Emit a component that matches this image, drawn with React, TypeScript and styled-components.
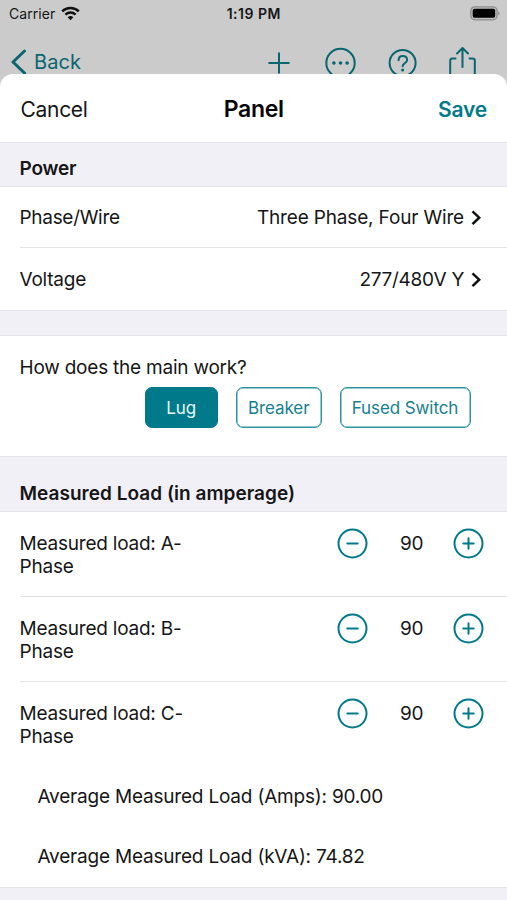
import React, { useState } from "react";
import styled, { createGlobalStyle, css } from "styled-components";

const TEAL = "#007a8a";
const DIM_TEAL = "#096570";
const LINE = "#e4e4e8";
const GROUP = "#f0f0f6";

const GlobalStyle = createGlobalStyle`
  * { box-sizing: border-box; }
  body {
    margin: 0;
    background: #cbcbcb;
    color: #161618;
    font-family: Inter, "Liberation Sans", sans-serif;
    font-size: 19px;
    line-height: 23px;
  }
  button { font: inherit; color: inherit; background: none; border: 0; padding: 0; margin: 0; }
  svg { display: block; flex: none; }
`;

const Screen = styled.div`
  width: 507px;
  height: 900px;
  overflow: hidden;
  display: flex;
  flex-direction: column;
  background: #cbcbcb;
`;

const StatusBar = styled.div`
  height: 28px;
  flex: none;
  display: grid;
  grid-template-columns: 1fr auto 1fr;
  align-items: center;
  padding: 0 7px 0 9px;
  font-size: 14px;
  line-height: 28px;
`;

const Carrier = styled.div`
  display: flex;
  align-items: center;
  gap: 6px;
  padding-bottom: 1px;
  letter-spacing: 0.05px;

  & > svg {
    margin-bottom: 2px;
  }
`;

const Clock = styled.div`
  font-weight: 600;
  font-size: 14px;
  letter-spacing: 0.5px;
  padding: 0 1.5px 1px 0;
`;

const BatterySlot = styled.div`
  display: flex;
  justify-content: flex-end;
  padding-bottom: 2px;
`;

const NavBar = styled.div`
  height: 46px;
  flex: none;
  overflow: hidden;
  display: flex;
  align-items: flex-start;
  justify-content: space-between;
  padding: 15px 30px 0 10px;
  color: ${DIM_TEAL};
`;

const BackButton = styled.button`
  height: 38px;
  display: flex;
  align-items: center;
  gap: 7px;
  font-size: 20px;
  letter-spacing: 0.1px;
`;

const NavActions = styled.div`
  height: 40px;
  display: flex;
  align-items: center;
  gap: 30px;

  & > :first-child {
    margin-right: 5px;
  }
`;

const Sheet = styled.main`
  flex: 1;
  background: #fff;
  border-radius: 13px 13px 0 0;
  overflow: hidden;
`;

const SheetHeader = styled.header`
  height: 69px;
  display: grid;
  grid-template-columns: 1fr auto 1fr;
  align-items: center;
  padding: 3px 20px 0 20.5px;
  border-bottom: 1px solid ${LINE};
  font-size: 21px;
`;

const CancelButton = styled.button`
  text-align: left;
  letter-spacing: -0.3px;
`;

const Title = styled.h1`
  margin: 0;
  font-size: 23px;
  font-weight: 600;
  letter-spacing: -0.3px;
  color: #050505;
`;

const SaveButton = styled.button`
  text-align: right;
  font-weight: 600;
  color: ${TEAL};
  letter-spacing: -0.2px;
`;

const GroupHeader = styled.h2<{ $height: number; $track: number }>`
  margin: 0;
  height: ${(p) => p.$height}px;
  display: flex;
  align-items: flex-end;
  padding: 0 19.5px 6px;
  background: ${GROUP};
  border-bottom: 1px solid ${LINE};
  font-size: 19px;
  line-height: 23px;
  font-weight: 600;
  letter-spacing: ${(p) => p.$track}px;
`;

const GroupGap = styled.div`
  height: 26px;
  background: ${GROUP};
  border: solid ${LINE};
  border-width: 1px 0;
`;

const divider = css`
  border-bottom: 1px solid ${LINE};
`;

const PickerRow = styled.div<{ $last?: boolean }>`
  height: ${(p) => (p.$last ? 62 : 61)}px;
  display: flex;
  align-items: center;
  justify-content: space-between;
  padding-right: 25px;
  margin-left: 19.5px;
  ${(p) => !p.$last && divider}
`;

const PickerValue = styled.div`
  display: flex;
  align-items: center;
  gap: 7px;
`;

const Text = styled.span<{ $track?: number }>`
  letter-spacing: ${(p) => p.$track ?? -0.3}px;
`;

const Question = styled.section`
  height: 121px;
  padding: 20px 36.5px 0 19.5px;
  border-bottom: 1px solid ${LINE};
`;

const Choices = styled.div`
  display: flex;
  justify-content: flex-end;
  gap: 17.75px;
  margin-top: 8px;
`;

const Choice = styled.button<{ $width: number; $on: boolean }>`
  width: ${(p) => p.$width}px;
  height: 41px;
  padding-top: 1px;
  border: 1px solid ${(p) => (p.$on ? TEAL : "#2c94a2")};
  box-shadow: inset 0 0 0 0.5px ${(p) => (p.$on ? TEAL : "#2c94a2")};
  border-radius: 7px;
  background: ${(p) => (p.$on ? TEAL : "#fff")};
  color: ${(p) => (p.$on ? "#e4f6f8" : "#16808e")};
  font-size: 17px;
  white-space: nowrap;
`;

const LoadRow = styled.div<{ $last?: boolean }>`
  height: ${(p) => (p.$last ? 84 : 85)}px;
  display: flex;
  justify-content: space-between;
  padding: 19px 23px 0 0;
  margin-left: 19.5px;
  ${(p) => !p.$last && divider}
`;

const LoadLabel = styled.div`
  width: 175px;
  padding-top: 1px;
  letter-spacing: -0.22px;
`;

const Stepper = styled.div`
  height: 25px;
  width: 147px;
  display: flex;
  align-items: center;
  justify-content: space-between;
`;

const Amount = styled.span`
  padding: 0 0 1px 2px;
  letter-spacing: -0.3px;
`;

const StepButton = styled.button`
  color: ${TEAL};
`;

const Summary = styled.div`
  border-bottom: 1px solid ${LINE};
  height: 122px;
  padding: 19px 37.5px 0;
  display: flex;
  flex-direction: column;
  gap: 37px;
`;

const Footer = styled.div`
  height: 13px;
  background: ${GROUP};
`;

const Wifi = () => (
  <svg width="19" height="15" viewBox="0 0 19 15" fill="none" stroke="#111" strokeWidth="2.5">
    <path d="M1.2 5.3C5.8.9 13.2.9 17.8 5.3" />
    <path d="M4.4 8.6c2.9-2.7 7.3-2.7 10.2 0" />
    <path d="M9.5 14.2 6.7 11.2c1.6-1.5 4-1.5 5.6 0z" fill="#111" stroke="none" />
  </svg>
);

const Battery = () => (
  <svg width="30" height="15" viewBox="0 0 30 15">
    <rect x=".8" y=".8" width="26.2" height="13" rx="4" fill="#bdbdbd" stroke="#8e8e8e" strokeWidth="1.3" />
    <rect x="2.7" y="2.8" width="22.5" height="9" rx="2" fill="#000" />
    <path d="M28.2 5.2c1.8.9 1.8 3.3 0 4.2z" fill="#8e8e8e" />
  </svg>
);

const BackChevron = () => (
  <svg width="17" height="26" viewBox="0 0 17 26" fill="none" stroke="currentColor" strokeWidth="3" strokeLinecap="round" strokeLinejoin="round">
    <path d="M14.5 2 3 13l11.5 11" />
  </svg>
);

const iconProps = {
  fill: "none",
  stroke: "currentColor",
  strokeWidth: 2,
  strokeLinecap: "round" as const,
  strokeLinejoin: "round" as const,
};

const Plus = () => (
  <svg width="22" height="22" viewBox="0 0 22 22" {...iconProps}>
    <path d="M11 1.2v19.6M1.2 11h19.6" />
  </svg>
);

const More = () => (
  <svg width="32" height="32" viewBox="0 0 32 32" {...iconProps}>
    <circle cx="15.5" cy="16" r="14.2" />
    <g fill="currentColor" stroke="none">
      <circle cx="8.9" cy="16" r="1.8" />
      <circle cx="15.5" cy="16" r="1.8" />
      <circle cx="22.1" cy="16" r="1.8" />
    </g>
  </svg>
);

const Help = () => (
  <svg width="32" height="32" viewBox="0 0 32 32" {...iconProps}>
    <circle cx="15.6" cy="16" r="13" />
    <path d="M11.6 13.2c0-2.7 1.7-4.2 4.2-4.2s4.3 1.6 4.3 3.9c0 3.2-4.5 3.2-4.5 6.4" />
    <circle cx="15.6" cy="22.9" r="1.5" fill="currentColor" stroke="none" />
  </svg>
);

const Share = () => (
  <svg width="28" height="34" viewBox="0 0 28 34" {...iconProps}>
    <path d="M13.5 21V2.5M8 7.5 13.5 2 19 7.5" />
    <path d="M6.5 12.5h-3a2.3 2.3 0 0 0-2.3 2.3V30a2.5 2.5 0 0 0 2.5 2.5h19.6a2.5 2.5 0 0 0 2.5-2.5V14.8a2.3 2.3 0 0 0-2.3-2.3h-3" />
  </svg>
);

const Disclosure = () => (
  <svg width="11" height="17" viewBox="0 0 11 17" fill="none" stroke="#111" strokeWidth="2.5">
    <path d="m1.5 2.3 6.7 6.4-6.7 6.4" />
  </svg>
);

const StepIcon = ({ plus }: { plus?: boolean }) => (
  <svg width="31" height="31" viewBox="0 0 31 31" {...iconProps}>
    <circle cx="15.5" cy="15.5" r="14" />
    <path d={plus ? "M10.3 15.5h10.4M15.5 10.3v10.4" : "M10.3 15.5h10.4"} />
  </svg>
);

const options = [
  { name: "Lug", width: 73.5, track: 0 },
  { name: "Breaker", width: 86, track: -0.1 },
  { name: "Fused Switch", width: 131, track: -0.1 },
];

const phases = ["A", "B", "C"];

export default function App() {
  const [main, setMain] = useState("Lug");
  const [loads, setLoads] = useState([90, 90, 90]);
  const step = (index: number, by: number) =>
    setLoads((current) => current.map((v, i) => (i === index ? Math.max(0, v + by) : v)));
  const average = loads.reduce((a, b) => a + b, 0) / loads.length;
  const kva = (average * 480 * Math.sqrt(3)) / 1000;

  return (
    <>
      <GlobalStyle />
      <Screen>
        <StatusBar>
          <Carrier>Carrier <Wifi /></Carrier>
          <Clock>1:19 PM</Clock>
          <BatterySlot><Battery /></BatterySlot>
        </StatusBar>
        <NavBar>
          <BackButton><BackChevron />Back</BackButton>
          <NavActions>
            <Plus />
            <More />
            <Help />
            <Share />
          </NavActions>
        </NavBar>
        <Sheet>
          <SheetHeader>
            <CancelButton>Cancel</CancelButton>
            <Title>Panel</Title>
            <SaveButton>Save</SaveButton>
          </SheetHeader>
          <GroupHeader $height={44} $track={-0.2}>Power</GroupHeader>
          <PickerRow>
            <Text>Phase/Wire</Text>
            <PickerValue><Text $track={-0.16}>Three Phase, Four Wire</Text><Disclosure /></PickerValue>
          </PickerRow>
          <PickerRow $last>
            <Text $track={-0.22}>Voltage</Text>
            <PickerValue><Text>277/480V Y</Text><Disclosure /></PickerValue>
          </PickerRow>
          <GroupGap />
          <Question>
            <Text $track={-0.22}>How does the main work?</Text>
            <Choices>
              {options.map((o) => (
                <Choice key={o.name} $width={o.width} $on={main === o.name} onClick={() => setMain(o.name)}>
                  <Text $track={o.track}>{o.name}</Text>
                </Choice>
              ))}
            </Choices>
          </Question>
          <GroupHeader $height={55} $track={0.03}>Measured Load (in amperage)</GroupHeader>
          {phases.map((phase, i) => (
            <LoadRow key={phase} $last={i === phases.length - 1}>
              <LoadLabel>{`Measured load: ${phase}-Phase`}</LoadLabel>
              <Stepper>
                <StepButton aria-label="Decrease" onClick={() => step(i, -1)}><StepIcon /></StepButton>
                <Amount>{loads[i]}</Amount>
                <StepButton aria-label="Increase" onClick={() => step(i, 1)}><StepIcon plus /></StepButton>
              </Stepper>
            </LoadRow>
          ))}
          <Summary>
            <Text $track={-0.2}>{`Average Measured Load (Amps): ${average.toFixed(2)}`}</Text>
            <Text $track={-0.2}>{`Average Measured Load (kVA): ${kva.toFixed(2)}`}</Text>
          </Summary>
          <Footer />
        </Sheet>
      </Screen>
    </>
  );
}
